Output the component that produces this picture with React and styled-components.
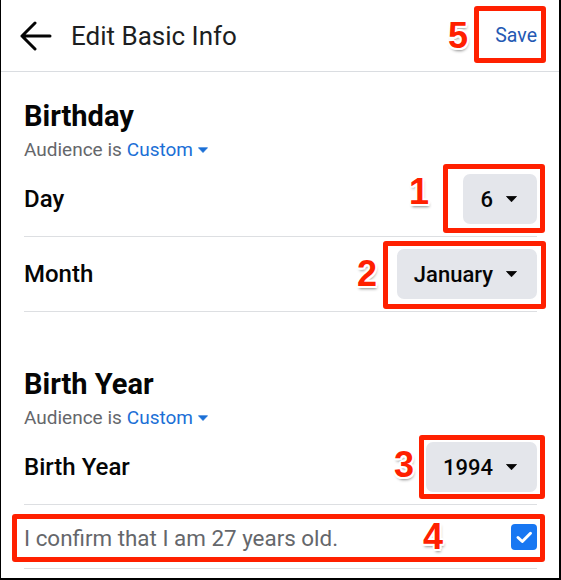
import React from "react";
import styled, { createGlobalStyle } from "styled-components";

const GlobalStyle = createGlobalStyle`
  html, body { margin: 0; padding: 0; background: #fff; }
  body { font-family: Roboto, "Liberation Sans", Arial, sans-serif; }
  * { box-sizing: border-box; }
`;

const Screen = styled.div`
  width: 561px;
  height: 580px;
  background: #fff;
  border-left: 1px solid #000;
  border-right: 2px solid #000;
  border-bottom: 2px solid #000;
  overflow: hidden;
  display: flex;
  flex-direction: column;
`;

const Header = styled.header`
  height: 72px;
  flex: none;
  display: flex;
  align-items: center;
  padding: 0 22px 0 18px;
  border-bottom: 1px solid #dadde1;
`;

const BackButton = styled.button`
  border: 0;
  background: none;
  padding: 0;
  margin: 1px 0 0 0;
  display: flex;
  color: #050505;
  cursor: pointer;
`;

const Title = styled.h1`
  margin: 0 0 0 18px;
  font-size: 26px;
  font-weight: 400;
  color: #1c1e21;
  flex: 1;
`;

const SaveButton = styled.button`
  border: 0;
  background: none;
  padding: 0;
  font-family: Roboto, sans-serif;
  font-size: 19.5px;
  color: #2459b3;
  cursor: pointer;
`;

const Content = styled.main`
  padding: 0 22px 0 23px;
  display: flex;
  flex-direction: column;
`;

const Section = styled.section`
  display: flex;
  flex-direction: column;
  padding-top: ${(p) => p.$top}px;
`;

const Heading = styled.h2`
  margin: 0;
  font-size: 29px;
  line-height: 34px;
  font-weight: 700;
  color: #050505;
`;

const Audience = styled.div`
  margin-top: 5px;
  font-size: 19px;
  line-height: 24px;
  color: #65676b;
  display: flex;
  align-items: center;
`;

const AudienceLink = styled.span`
  color: #1b6fd6;
  margin-left: 5px;
  display: inline-flex;
  align-items: center;
  gap: 5px;
`;

const Row = styled.div`
  position: relative;
  display: flex;
  align-items: center;
  justify-content: space-between;
  padding: ${(p) => (p.$tall ? "0" : "12px 0")};
  min-height: ${(p) => (p.$tall ? "64px" : "0")};
  border-bottom: 1px solid #dddfe2;
`;

const Label = styled.span`
  font-size: 24px;
  font-weight: 500;
  color: #050505;
`;

const ConfirmText = styled.span`
  font-size: 22.4px;
  color: #65676b;
  margin-top: 3px;
`;

const Dropdown = styled.button`
  height: 50px;
  border: 0;
  border-radius: 7px;
  background: #e4e6eb;
  padding: 0 20px 0 17px;
  display: flex;
  align-items: center;
  gap: 13px;
  font-family: Roboto, sans-serif;
  font-size: 22px;
  font-weight: 500;
  color: #050505;
`;

const Target = styled.div`
  position: relative;
  display: flex;
  align-items: center;
`;

const Frame = styled.div`
  position: absolute;
  top: ${(p) => p.$t}px;
  right: ${(p) => p.$r}px;
  bottom: ${(p) => p.$b}px;
  left: ${(p) => p.$l}px;
  border: 5px solid #ff2000;
  border-radius: 3px;
  pointer-events: none;
`;

const Num = styled.span`
  position: absolute;
  right: ${(p) => p.$right}px;
  top: 50%;
  transform: translateY(calc(-50% + ${(p) => p.$dy}px));
  font-family: "Liberation Sans", Arial, sans-serif;
  font-weight: 700;
  font-size: 36px;
  line-height: 1;
  color: #ff2000;
  text-shadow:
    2px 0 0 #fff, -2px 0 0 #fff, 0 2px 0 #fff, 0 -2px 0 #fff,
    1.5px 1.5px 0 #fff, -1.5px 1.5px 0 #fff, 1.5px -1.5px 0 #fff, -1.5px -1.5px 0 #fff,
    1px 3px 3px rgba(0, 0, 0, 0.45);
  pointer-events: none;
`;

const Caret = ({ color = "#050505", w = 11, h = 6 }) => (
  <svg width={w} height={h} viewBox="0 0 11 6">
    <path d="M0.5 0.5 H10.5 L5.5 5.8 Z" fill={color} stroke={color} strokeWidth="0.8" strokeLinejoin="round" />
  </svg>
);

const Callout = ({ n, t, r, b, l, right, dy = 0, children }) => (
  <Target>
    {children}
    <Frame $t={t} $r={r} $b={b} $l={l} />
    <Num $right={right} $dy={dy}>{n}</Num>
  </Target>
);

const Checkbox = () => (
  <svg width="26" height="26" viewBox="0 0 26 26">
    <rect x="0" y="0" width="26" height="26" rx="4" fill="#1877f2" />
    <path d="M7 13.5 L11.3 17.5 L19.5 9.3" fill="none" stroke="#fff" strokeWidth="3" strokeLinecap="round" strokeLinejoin="round" />
  </svg>
);

export default function App() {
  return (
    <>
      <GlobalStyle />
      <Screen>
        <Header>
          <BackButton aria-label="Back">
            <svg width="34" height="30" viewBox="0 0 34 30">
              <path d="M3 15 H31 M16 2 L3 15 L16 28" fill="none" stroke="currentColor" strokeWidth="3" strokeLinecap="round" strokeLinejoin="round" />
            </svg>
          </BackButton>
          <Title>Edit Basic Info</Title>
          <Callout n="5" t={-18} r={-9} b={-16} l={-21} right={69} dy={0}>
            <SaveButton>Save</SaveButton>
          </Callout>
        </Header>
        <Content>
          <Section $top={27}>
            <Heading>Birthday</Heading>
            <Audience>
              Audience is
              <AudienceLink>
                Custom <Caret color="#1b6fd6" w={10} h={6} />
              </AudienceLink>
            </Audience>
            <Row>
              <Label>Day</Label>
              <Callout n="1" t={-10} r={-8} b={-9} l={-20} right={108} dy={-7}>
                <Dropdown>
                  6 <Caret />
                </Dropdown>
              </Callout>
            </Row>
            <Row>
              <Label>Month</Label>
              <Callout n="2" t={-8} r={-9} b={-10} l={-14} right={160} dy={0}>
                <Dropdown>
                  January <Caret />
                </Dropdown>
              </Callout>
            </Row>
          </Section>
          <Section $top={55}>
            <Heading>Birth Year</Heading>
            <Audience>
              Audience is
              <AudienceLink>
                Custom <Caret color="#1b6fd6" w={10} h={6} />
              </AudienceLink>
            </Audience>
            <Row>
              <Label>Birth Year</Label>
              <Callout n="3" t={-7} r={-8} b={-7} l={-7} right={123} dy={-2}>
                <Dropdown>
                  1994 <Caret />
                </Dropdown>
              </Callout>
            </Row>
            <Row $tall>
              <ConfirmText>I confirm that I am 27 years old.</ConfirmText>
              <Checkbox />
              <Frame $t={9} $r={-8} $b={6} $l={-12} />
              <Num $right={94} $dy={0}>4</Num>
            </Row>
          </Section>
        </Content>
      </Screen>
    </>
  );
}
